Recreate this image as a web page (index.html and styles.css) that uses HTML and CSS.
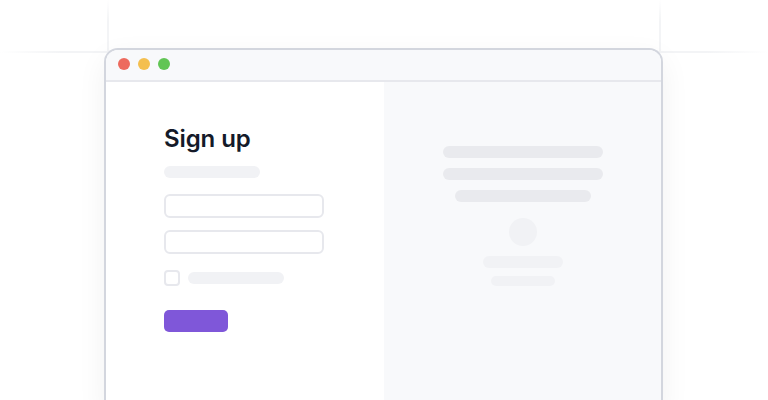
FILE: index.html
```html
<!DOCTYPE html>
<html lang="en">
<head>
<meta charset="utf-8">
<title>Sign up</title>
<link rel="stylesheet" href="styles.css">
</head>
<body>
<div class="stage">
  <div class="guide guide-h"></div>
  <div class="guide guide-v guide-left"></div>
  <div class="guide guide-v guide-right"></div>
  <div class="window">
    <div class="titlebar">
      <span class="dot dot-red"></span>
      <span class="dot dot-yellow"></span>
      <span class="dot dot-green"></span>
    </div>
    <div class="content">
      <div class="form-pane">
        <h1 class="title">Sign up</h1>
        <div class="sk sk-sub"></div>
        <div class="input"></div>
        <div class="input"></div>
        <div class="check-row">
          <span class="checkbox"></span>
          <span class="sk sk-label"></span>
        </div>
        <div class="button"></div>
      </div>
      <div class="preview-pane">
        <div class="sk sk-dark sk-w160"></div>
        <div class="sk sk-dark sk-w160"></div>
        <div class="sk sk-dark sk-w136"></div>
        <div class="avatar"></div>
        <div class="sk sk-w80"></div>
        <div class="sk sk-w64"></div>
      </div>
    </div>
  </div>
</div>
</body>
</html>
```

FILE: styles.css
```css
* { box-sizing: border-box; }
html, body {
  margin: 0;
  padding: 0;
  background: #ffffff;
  font-family: Inter, "Noto Sans", sans-serif;
}
.stage {
  position: relative;
  width: 768px;
  height: 400px;
  overflow: hidden;
  padding: 48px 0 0 104px;
}
.guide { position: absolute; }
.guide-h {
  left: 0;
  top: 51px;
  width: 768px;
  height: 2px;
  background: linear-gradient(90deg, rgba(243,244,246,0) 0%, #f3f4f6 8%, #f3f4f6 92%, rgba(243,244,246,0) 100%);
}
.guide-v {
  top: 0;
  width: 2px;
  height: 52px;
  background: linear-gradient(180deg, rgba(243,244,246,0) 0%, #f3f4f6 40%, #f3f4f6 100%);
}
.guide-left { left: 107px; }
.guide-right { left: 659px; }
.window {
  position: relative;
  width: 559px;
  height: 360px;
  border: 2px solid #d3d6de;
  border-bottom: none;
  border-radius: 14px 14px 0 0;
  background: #ffffff;
  box-shadow: 0 10px 30px rgba(17, 24, 39, 0.06);
  display: flex;
  flex-direction: column;
  overflow: hidden;
}
.titlebar {
  height: 32px;
  flex: none;
  background: #f8f9fb;
  border-bottom: 2px solid #e7e8ed;
  display: flex;
  align-items: center;
  gap: 8px;
  padding: 0 0 2px 12px;
}
.dot {
  width: 12px;
  height: 12px;
  border-radius: 50%;
}
.dot-red { background: #ed6a5e; }
.dot-yellow { background: #f4bf4f; }
.dot-green { background: #61c554; }
.content {
  flex: 1;
  display: grid;
  grid-template-columns: 278px 1fr;
}
.form-pane {
  padding: 42px 0 0 58px;
  display: flex;
  flex-direction: column;
  align-items: flex-start;
}
.title {
  margin: 0;
  font-size: 24px;
  line-height: 30px;
  font-weight: 600;
  color: #141a29;
  letter-spacing: -0.1px;
}
.sk {
  display: block;
  height: 12px;
  border-radius: 6px;
  background: #f1f2f5;
}
.sk-sub { width: 96px; margin-top: 12px; }
.input {
  width: 160px;
  height: 24px;
  border: 2px solid #e7e8ed;
  border-radius: 6px;
  background: #ffffff;
  margin-top: 16px;
}
.input + .input { margin-top: 12px; }
.check-row {
  margin-top: 16px;
  display: flex;
  align-items: center;
  gap: 8px;
}
.checkbox {
  width: 16px;
  height: 16px;
  border: 2px solid #e7e8ed;
  border-radius: 4px;
}
.sk-label { width: 96px; }
.button {
  margin-top: 24px;
  width: 64px;
  height: 22px;
  border-radius: 5px;
  background: #7f57d9;
}
.preview-pane {
  background: #f8f9fb;
  padding-top: 64px;
  display: flex;
  flex-direction: column;
  align-items: center;
}
.sk-dark { background: #e9eaee; }
.sk-w160 { width: 160px; }
.sk-w136 { width: 136px; }
.sk-w160 + .sk { margin-top: 10px; }
.avatar {
  width: 28px;
  height: 28px;
  border-radius: 50%;
  background: #f1f2f5;
  margin-top: 16px;
}
.sk-w80 { width: 80px; margin-top: 10px; }
.sk-w64 { width: 64px; height: 10px; border-radius: 5px; margin-top: 8px; }
```
